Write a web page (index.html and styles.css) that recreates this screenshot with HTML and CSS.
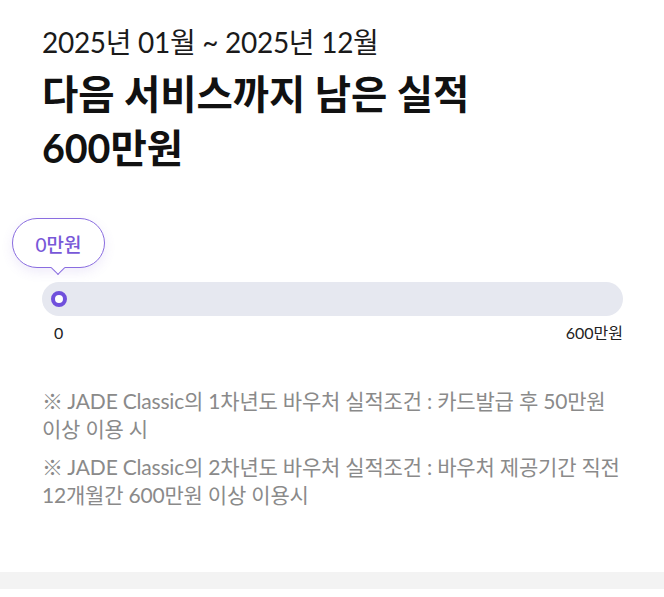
FILE: index.html
```html
<!DOCTYPE html>
<html lang="ko">
<head>
    <meta charset="UTF-8">
    <meta name="viewport" content="width=device-width, initial-scale=1.0">
    <title>실적 현황</title>
    <link rel="stylesheet" href="styles.css">
</head>
<body>
    <div class="page">
        <section class="summary">
            <p class="period">2025년 01월 ~ 2025년 12월</p>
            <h1 class="headline">다음 서비스까지 남은 실적<br>600만원</h1>
        </section>

        <section class="progress">
            <div class="track">
                <div class="bubble">0만원</div>
                <div class="dot"></div>
            </div>
            <div class="scale">
                <span>0</span>
                <span>600만원</span>
            </div>
        </section>

        <section class="notes">
            <p>※ JADE Classic의 1차년도 바우처 실적조건 : 카드발급 후 50만원 이상 이용 시</p>
            <p>※ JADE Classic의 2차년도 바우처 실적조건 : 바우처 제공기간 직전 12개월간 600만원 이상 이용시</p>
        </section>
    </div>
    <div class="divider"></div>
</body>
</html>
```

FILE: styles.css
```css
body {
    margin: 0;
    padding: 0;
    background: #fff;
    font-family: Lato, "Noto Sans CJK KR", sans-serif;
    color: #111;
}

.page {
    padding: 23px 41px 0 42px;
    height: 548px;
    box-sizing: border-box;
}

.period {
    margin: 0;
    font-size: 28px;
    line-height: 38px;
    letter-spacing: -0.3px;
    color: #1a1a1a;
}

.headline {
    margin: 6px 0 0;
    font-size: 39.5px;
    font-weight: 700;
    line-height: 54px;
    letter-spacing: -0.1px;
    color: #111;
}

.progress {
    margin-top: 107px;
}

.track {
    position: relative;
    height: 34px;
    background: #e6e8f0;
    border-radius: 17px;
    display: flex;
    align-items: center;
    padding-left: 9px;
}

.dot {
    width: 8px;
    height: 8px;
    border: 4px solid #7050dc;
    border-radius: 50%;
    background: #fff;
}

.bubble {
    position: absolute;
    left: -30px;
    bottom: 48px;
    width: 93px;
    height: 50px;
    box-sizing: border-box;
    border: 1.5px solid #8a6de0;
    border-radius: 25px;
    background: #fff;
    color: #7858d8;
    font-size: 19px;
    font-weight: 500;
    display: flex;
    align-items: center;
    justify-content: center;
    box-shadow: 0 4px 12px rgba(120, 90, 210, 0.12);
}

.bubble::after {
    content: '';
    position: absolute;
    left: 40px;
    bottom: -6px;
    width: 9px;
    height: 9px;
    background: #fff;
    border-right: 1.5px solid #8a6de0;
    border-bottom: 1.5px solid #8a6de0;
    transform: rotate(45deg);
}

.scale {
    display: flex;
    justify-content: space-between;
    margin-top: 5px;
    padding-left: 12px;
    font-size: 16px;
    line-height: 24px;
    color: #222;
}

.notes {
    margin-top: 42px;
    color: #8a8a8a;
    font-size: 21px;
    line-height: 28px;
    letter-spacing: -0.2px;
    word-break: keep-all;
}

.notes p {
    margin: 0 0 10px;
}

.divider {
    margin-top: 24px;
    height: 17px;
    background: #f3f3f3;
}
```
